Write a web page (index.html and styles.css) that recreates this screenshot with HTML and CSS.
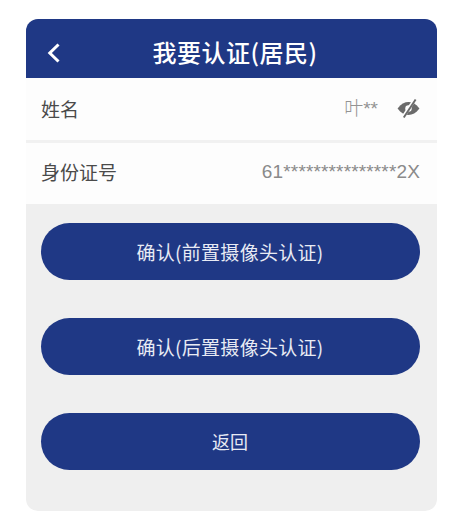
FILE: index.html
```html
<!DOCTYPE html>
<html lang="zh-CN">
<head>
<meta charset="utf-8">
<title>我要认证(居民)</title>
<link rel="stylesheet" href="styles.css">
</head>
<body>
<main class="card">
  <header class="topbar">
    <svg class="back" viewBox="0 0 14 20" width="14" height="20" aria-hidden="true"><path d="M12.500 1.500 3.800 10l8.700 8.500" fill="none" stroke="#fff" stroke-width="3"/></svg>
    <h1 class="title">我要认证(居民)</h1>
  </header>
  <section class="rows">
    <div class="row">
      <span class="label">姓名</span>
      <span class="value"><span class="masked">叶**</span><svg class="eye" viewBox="0 0 24 20" width="23" height="19" aria-hidden="true"><path d="M.5 10C4 5.200 8 3.200 12 3.200S20 5.200 23.500 10c-3.500 4.800-7.500 6.800-11.500 6.800S4 14.800.5 10Z" fill="#6b6b6b"/><circle cx="12" cy="10" r="3.400" fill="#fff"/><path d="M18.500 .5 6 19.500" stroke="#fff" stroke-width="3.500"/><path d="M19.500 .5 7 19.500" stroke="#6b6b6b" stroke-width="2"/></svg></span>
    </div>
    <div class="row">
      <span class="label">身份证号</span>
      <span class="value id-value">61***************2X</span>
    </div>
  </section>
  <div class="actions">
    <button class="btn" type="button">确认(前置摄像头认证)</button>
    <button class="btn btn-gap" type="button">确认(后置摄像头认证)</button>
    <button class="btn btn-gap btn-short" type="button">返回</button>
  </div>
</main>
</body>
</html>
```
FILE: styles.css
```css
* { box-sizing: border-box; }
html, body { margin: 0; background: #fff; }
body {
  width: 454px;
  height: 513px;
  padding: 19px 17px 2px 26px;
  font-family: "Noto Sans CJK SC", "Liberation Sans", sans-serif;
}
.card {
  height: 492px;
  background: #efefef;
  border-radius: 12px;
  overflow: hidden;
}
.topbar {
  position: relative;
  height: 59px;
  padding: 6px 0 0 7px;
  background: #1f3885;
  display: flex;
  align-items: center;
  justify-content: center;
}
.back { position: absolute; left: 20px; top: 24px; }
.title {
  margin: 0;
  font-size: 24px;
  font-weight: 500;
  letter-spacing: .5px;
  line-height: 1;
  color: #fff;
}
.rows { background: #f1f1f1; }
.row {
  height: 62px;
  padding: 0 17px 2px 15px;
  display: flex;
  align-items: center;
  justify-content: space-between;
  background: #fdfdfd;
}
.row + .row { margin-top: 3px; height: 61px; padding-bottom: 4px; }
.label { font-size: 19px; line-height: 1; color: #4a4a4a; }
.value {
  display: flex;
  align-items: center;
  font-family: "Liberation Sans", "Noto Sans CJK SC", sans-serif;
  font-size: 18px;
  line-height: 1;
  color: #8a8a8a;
}
.id-value { font-size: 19px; letter-spacing: .15px; }
.masked { font-size: 19px; font-weight: 300; color: #939393; }
.eye { margin-left: 19px; }
.actions { padding: 19px 17px 0 15px; }
.btn {
  display: block;
  width: 100%;
  height: 57px;
  padding: 0 1px 1px 0;
  border: 0;
  border-radius: 29px;
  background: #1f3885;
  color: #e8ebf4;
  font: 19px/1 "Noto Sans CJK SC", "Liberation Sans", sans-serif;
  letter-spacing: .3px;
}
.btn-gap { margin-top: 38px; }
.btn-short { font-size: 18px; letter-spacing: 0; }
```
